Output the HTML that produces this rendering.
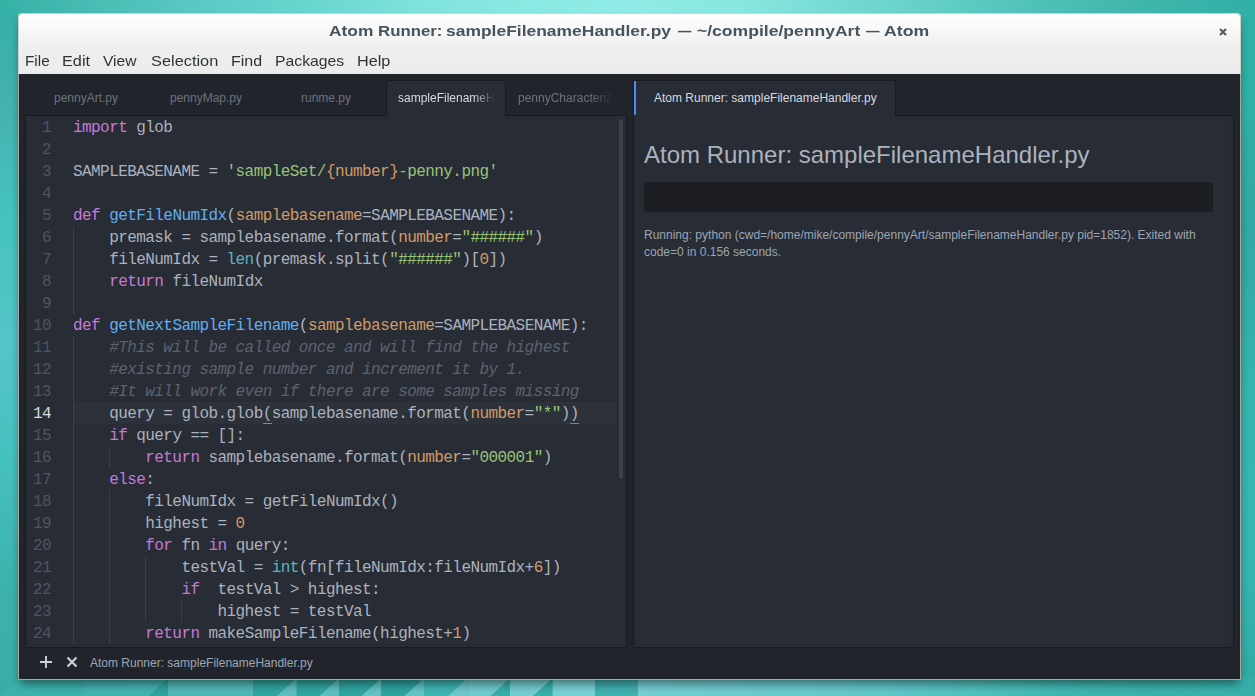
<!DOCTYPE html>
<html>
<head>
<meta charset="utf-8">
<title>Atom Runner</title>
<style>
html,body{margin:0;padding:0;}
body{width:1255px;height:696px;overflow:hidden;position:relative;background:#35b0a9;font-family:"Liberation Sans",sans-serif;}
#wall{position:absolute;left:0;top:0;width:1255px;height:696px;}
#win{position:absolute;left:18px;top:13px;width:1221px;height:665px;border:1px solid #a8a5a3;border-radius:4px 4px 0 0;background:#21252b;box-shadow:0 6px 10px -2px rgba(0,0,0,0.47);}
#win::before{content:"";position:absolute;left:-1px;top:-1px;width:1221px;height:60px;border:1px solid #d6d1ce;border-bottom:none;border-radius:4px 4px 0 0;}
#chrome{position:absolute;left:0;top:0;width:1221px;height:60px;border-radius:3px 3px 0 0;background:linear-gradient(#fefefe 0px,#f7f7f7 18px,#eeeeee 36px,#ececec 60px);}
#title{position:absolute;left:0;top:7px;width:1221px;height:20px;line-height:20px;font-weight:bold;font-size:14px;color:#47545c;white-space:pre;}
#title span{position:absolute;top:0;display:block;transform-origin:0 50%;}
.menu{position:absolute;top:37px;height:20px;line-height:20px;font-size:15px;color:#2e3436;white-space:pre;transform-origin:0 50%;}
#dark{position:absolute;left:0;top:60px;width:1221px;height:605px;background:#21252b;}
/* tabs */
.tab{position:absolute;top:7px;height:34px;line-height:34px;font-size:12px;color:#6b727e;white-space:pre;overflow:hidden;}
.tab.act{background:#282c34;color:#d7dae0;border:1px solid #181a1f;border-bottom:none;border-radius:3px 3px 0 0;box-sizing:border-box;height:36px;top:6px;z-index:3;}
.tab u{display:block;text-decoration:none;overflow:hidden;-webkit-mask-image:linear-gradient(to right,#000 0,#000 calc(100% - 22px),transparent 100%);mask-image:linear-gradient(to right,#000 0,#000 calc(100% - 22px),transparent 100%);}
/* editor */
#ed{position:absolute;left:6px;top:41px;width:602px;height:533px;background:#282c34;border:1px solid #181a1f;box-sizing:border-box;overflow:hidden;}
#gutter,#code{position:absolute;top:1px;font-family:"Liberation Mono",monospace;font-size:16px;letter-spacing:-0.57px;line-height:22px;white-space:pre;color:#abb2bf;margin:0;}
#gutter{left:0;width:25px;text-align:right;color:#4d5565;}
#gutter b{font-weight:normal;color:#d7dae0;}
#code{left:47px;}
#code b{font-weight:normal;}
.k{color:#c678dd}.f{color:#61afef}.s{color:#98c379}.o{color:#d19a66}.c{color:#56b6c2}.m{color:#5c6370;font-style:italic}
.g{position:absolute;width:1px;height:22px;background:#3a3f4a;}
#curline{position:absolute;left:47px;top:286px;width:543px;height:22px;background:#2c313a;}
.bm{position:absolute;height:1px;background:#528bff;width:9px;}
#sb{position:absolute;left:593px;top:3px;width:4px;height:360px;border-radius:2px;background:#3c414c;}
/* right pane */
#rtab{position:absolute;left:614px;top:6px;width:263px;height:36px;z-index:3;box-sizing:border-box;background:#282c34;border:1px solid #181a1f;border-bottom:none;border-radius:0 3px 0 0;}
#rtab i{position:absolute;left:0;top:0;width:2px;height:34px;background:#528bff;border-radius:0 0 1px 1px;}
#rtab span{position:absolute;left:20px;top:0;line-height:34px;font-size:12px;color:#d7dae0;white-space:pre;}
#rp{position:absolute;left:614px;top:41px;width:601px;height:533px;background:#282c34;border:1px solid #181a1f;box-sizing:border-box;overflow:hidden;}
#rp h1{position:absolute;left:10px;top:24px;margin:0;font-size:24px;font-weight:normal;line-height:30px;color:#abb2bf;white-space:pre;}
#rp .out{position:absolute;left:10px;top:66px;width:569px;height:30px;background:#1c1e24;border-radius:3px;}
#rp p{position:absolute;left:10px;top:111px;margin:0;font-size:12px;line-height:17px;color:#9da5b4;white-space:pre;}
#rsb{position:absolute;left:590px;top:0;width:9px;height:533px;background:#262a32;}
/* status */
#status{position:absolute;left:0;top:573px;width:1221px;height:32px;}
#status span{position:absolute;left:71px;top:8px;line-height:16px;font-size:12px;color:#9da5b4;white-space:pre;}
</style>
</head>
<body>
<div id="wall"><svg width="1255" height="696" viewBox="0 0 1255 696" style="display:block"><defs><linearGradient id="gb" gradientUnits="userSpaceOnUse" x1="0" y1="0" x2="1255" y2="0"><stop offset="0.0000" stop-color="#74ced3"/><stop offset="0.5084" stop-color="#74ced3"/><stop offset="0.5761" stop-color="#6ecbd0"/><stop offset="0.6438" stop-color="#68c9cc"/><stop offset="0.7116" stop-color="#5fc5c7"/><stop offset="0.7793" stop-color="#4fc0bd"/><stop offset="0.8470" stop-color="#40b6b1"/><stop offset="0.9147" stop-color="#3ab2ac"/><stop offset="0.9888" stop-color="#38b1ab"/><stop offset="1.0000" stop-color="#32aca5"/></linearGradient><linearGradient id="gt" gradientUnits="userSpaceOnUse" x1="0" y1="0" x2="1255" y2="0"><stop offset="0.0000" stop-color="#35b1a6"/><stop offset="0.0797" stop-color="#4abdb5"/><stop offset="0.1673" stop-color="#5ccbc5"/><stop offset="0.2510" stop-color="#6ad6d0"/><stop offset="0.3347" stop-color="#7fe2dc"/><stop offset="0.4183" stop-color="#8ae9e2"/><stop offset="0.5020" stop-color="#8eebe5"/><stop offset="0.5896" stop-color="#88e7e0"/><stop offset="0.6693" stop-color="#74dad2"/><stop offset="0.7530" stop-color="#62cec6"/><stop offset="0.8367" stop-color="#4dbfb6"/><stop offset="0.9163" stop-color="#3eb5ab"/><stop offset="1.0000" stop-color="#31b0a5"/></linearGradient><linearGradient id="gl" gradientUnits="userSpaceOnUse" x1="0" y1="0" x2="0" y2="696"><stop offset="0.0000" stop-color="#35b1a6"/><stop offset="0.0862" stop-color="#3cb1ab"/><stop offset="0.1537" stop-color="#45b2b0"/><stop offset="0.3118" stop-color="#44c3be"/><stop offset="0.4986" stop-color="#54c5c9"/><stop offset="0.6566" stop-color="#45c1c0"/><stop offset="0.8290" stop-color="#3db3ae"/><stop offset="0.9856" stop-color="#3aada6"/><stop offset="1.0000" stop-color="#3aada6"/></linearGradient><linearGradient id="gr" gradientUnits="userSpaceOnUse" x1="0" y1="0" x2="0" y2="696"><stop offset="0.0000" stop-color="#31b0a5"/><stop offset="0.1523" stop-color="#30b0a6"/><stop offset="0.3319" stop-color="#33a8a4"/><stop offset="0.5546" stop-color="#35b4ae"/><stop offset="0.7845" stop-color="#37b6b3"/><stop offset="0.9195" stop-color="#33afa9"/><stop offset="1.0000" stop-color="#30a9a1"/></linearGradient></defs><rect x="0" y="0" width="1255" height="696" fill="#37b1aa"/><rect x="0" y="0" width="30" height="696" fill="url(#gl)"/><rect x="1225" y="0" width="30" height="696" fill="url(#gr)"/><polygon points="0,0 1255,0 1255,0 1241,14 1241,20 19,20 19,14" fill="url(#gt)"/><rect x="0" y="676" width="43" height="20" fill="#3db2ac"/><rect x="43" y="676" width="42" height="20" fill="#3cb0ab"/><rect x="85" y="676" width="43" height="20" fill="#42b3b1"/><rect x="128" y="676" width="40" height="20" fill="#43b4b2"/><rect x="168" y="676" width="85" height="20" fill="#4fb8b7"/><rect x="253" y="676" width="43.5" height="20" fill="#30a6a1"/><rect x="296.5" y="676" width="42.5" height="20" fill="#30a6a1"/><rect x="339" y="676" width="42" height="20" fill="#2fa5a0"/><rect x="381" y="676" width="43" height="20" fill="#2ea39f"/><rect x="424" y="676" width="43.5" height="20" fill="#3db5b2"/><rect x="467.5" y="676" width="42.5" height="20" fill="#70c9cc"/><rect x="510" y="676" width="42.5" height="20" fill="#74cdd0"/><rect x="552.5" y="676" width="42.5" height="20" fill="#78d0d4"/><rect x="595" y="676" width="43" height="20" fill="#3fb1af"/><rect x="638" y="676" width="617" height="20" fill="url(#gb)"/><polygon points="148.5,696 166,680 168,678 168,696" fill="#30a39f"/><polygon points="277.0,696 294.5,680 296.5,678 296.5,696" fill="#5fbfc0"/><polygon points="319.5,696 337,680 339,678 339,696" fill="#5fbfc0"/><polygon points="361.5,696 379,680 381,678 381,696" fill="#63c3c4"/><polygon points="404.5,696 422,680 424,678 424,696" fill="#63c3c4"/><polygon points="448.0,696 465.5,680 467.5,678 467.5,696" fill="#6dc8cb"/><polygon points="490.5,696 508,680 510,678 510,696" fill="#38adaa"/><polygon points="533.0,696 550.5,680 552.5,678 552.5,696" fill="#36aeaa"/><polygon points="0,676 19,676 19,680 0,696" fill="url(#gl)"/></svg></div>
<div id="win">
 <div id="chrome">
  <div id="title"><span style="left:309.86px;transform:scaleX(1.2382)">Atom</span><span style="left:359.0px;transform:scaleX(1.2)">Runner:</span><span style="left:427.35px;transform:scaleX(1.2464)">sampleFilenameHandler.py</span><span style="left:658.7px;transform:scaleX(0.9571)">—</span><span style="left:677.85px;transform:scaleX(1.2527)">~/compile/pennyArt</span><span style="left:846.7px;transform:scaleX(0.9643)">—</span><span style="left:864.54px;transform:scaleX(1.2618)">Atom</span></div>
  <svg style="position:absolute;left:1198.5px;top:12.5px" width="10" height="10" viewBox="0 0 10 10"><path d="M2 2 L8 8 M8 2 L2 8" stroke="#4e5a5f" stroke-width="2" stroke-linecap="butt" fill="none"/></svg>
  <span class="menu" style="left:6px;transform:scaleX(1.02)">File</span>
  <span class="menu" style="left:43px;transform:scaleX(1.085)">Edit</span>
  <span class="menu" style="left:84px;transform:scaleX(1.04)">View</span>
  <span class="menu" style="left:132px;transform:scaleX(1.09)">Selection</span>
  <span class="menu" style="left:212px;transform:scaleX(1.065)">Find</span>
  <span class="menu" style="left:256px;transform:scaleX(1.05)">Packages</span>
  <span class="menu" style="left:338px;transform:scaleX(1.08)">Help</span>
 </div>
 <div id="dark">
  <span class="tab" style="left:35px">pennyArt.py</span>
  <span class="tab" style="left:151px">pennyMap.py</span>
  <span class="tab" style="left:282px">runme.py</span>
  <span class="tab act" style="left:367px;width:120px;padding-left:11px"><u style="width:97px">sampleFilenameHandler.py</u></span>
  <span class="tab" style="left:499px;width:96px"><u style="width:95px">pennyCharacterization.py</u></span>
  <div id="ed">
   <div id="curline"></div>
   <i class="g" style="left:47.0px;top:110px"></i><i class="g" style="left:47.0px;top:132px"></i><i class="g" style="left:47.0px;top:154px"></i><i class="g" style="left:47.0px;top:220px"></i><i class="g" style="left:47.0px;top:242px"></i><i class="g" style="left:47.0px;top:264px"></i><i class="g" style="left:47.0px;top:286px"></i><i class="g" style="left:47.0px;top:308px"></i><i class="g" style="left:47.0px;top:330px"></i><i class="g" style="left:83.12px;top:330px"></i><i class="g" style="left:47.0px;top:352px"></i><i class="g" style="left:47.0px;top:374px"></i><i class="g" style="left:83.12px;top:374px"></i><i class="g" style="left:47.0px;top:396px"></i><i class="g" style="left:83.12px;top:396px"></i><i class="g" style="left:47.0px;top:418px"></i><i class="g" style="left:83.12px;top:418px"></i><i class="g" style="left:47.0px;top:440px"></i><i class="g" style="left:83.12px;top:440px"></i><i class="g" style="left:119.24px;top:440px"></i><i class="g" style="left:47.0px;top:462px"></i><i class="g" style="left:83.12px;top:462px"></i><i class="g" style="left:119.24px;top:462px"></i><i class="g" style="left:47.0px;top:484px"></i><i class="g" style="left:83.12px;top:484px"></i><i class="g" style="left:119.24px;top:484px"></i><i class="g" style="left:155.36px;top:484px"></i><i class="g" style="left:47.0px;top:506px"></i><i class="g" style="left:83.12px;top:506px"></i><i class="g" style="left:47px;top:176px"></i>
<pre id="gutter">1
2
3
4
5
6
7
8
9
10
11
12
13
<b class="cur">14</b>
15
16
17
18
19
20
21
22
23
24</pre>
<pre id="code"><b class="k">import</b> glob

SAMPLEBASENAME = <b class="s">'sampleSet/</b><b class="o">{number}</b><b class="s">-penny.png'</b>

<b class="k">def</b> <b class="f">getFileNumIdx</b>(<b class="o">samplebasename</b>=SAMPLEBASENAME):
    premask = samplebasename.format(<b class="o">number</b>=<b class="s">"######"</b>)
    fileNumIdx = <b class="c">len</b>(premask.split(<b class="s">"######"</b>)[<b class="o">0</b>])
    <b class="k">return</b> fileNumIdx

<b class="k">def</b> <b class="f">getNextSampleFilename</b>(<b class="o">samplebasename</b>=SAMPLEBASENAME):
    <b class="m">#This will be called once and will find the highest</b>
    <b class="m">#existing sample number and increment it by 1.</b>
    <b class="m">#It will work even if there are some samples missing</b>
    query = glob.glob(samplebasename.format(<b class="o">number</b>=<b class="s">"*"</b>))
    <b class="k">if</b> query == []:
        <b class="k">return</b> samplebasename.format(<b class="o">number</b>=<b class="s">"000001"</b>)
    <b class="k">else</b>:
        fileNumIdx = getFileNumIdx()
        highest = <b class="o">0</b>
        <b class="k">for</b> fn <b class="k">in</b> query:
            testVal = <b class="c">int</b>(fn[fileNumIdx:fileNumIdx+<b class="o">6</b>])
            <b class="k">if</b>  testVal &gt; highest:
                highest = testVal
        <b class="k">return</b> makeSampleFilename(highest+<b class="o">1</b>)</pre>
   <i class="bm" style="left:236.6px;top:307px"></i>
   <i class="bm" style="left:543.6px;top:307px"></i>
   <div id="sb"></div>
  </div>
  <div id="rtab"><i></i><span>Atom Runner: sampleFilenameHandler.py</span></div>
  <div id="rp">
   <h1>Atom Runner: sampleFilenameHandler.py</h1>
   <div class="out"></div>
   <p>Running: python (cwd=/home/mike/compile/pennyArt/sampleFilenameHandler.py pid=1852). Exited with
code=0 in 0.156 seconds.</p>
   <div id="rsb"></div>
  </div>
  <div id="status">
   <svg style="position:absolute;left:20px;top:8px" width="14" height="14" viewBox="0 0 14 14"><path d="M7 1 V13 M1 7 H13" stroke="#c9d0dc" stroke-width="1.9" fill="none"/></svg>
   <svg style="position:absolute;left:47px;top:9px" width="12" height="12" viewBox="0 0 12 12"><path d="M1.5 1.5 L10.5 10.5 M10.5 1.5 L1.5 10.5" stroke="#c9d0dc" stroke-width="2.2" fill="none"/></svg>
   <span>Atom Runner: sampleFilenameHandler.py</span>
  </div>
 </div>
</div>
</body>
</html>
